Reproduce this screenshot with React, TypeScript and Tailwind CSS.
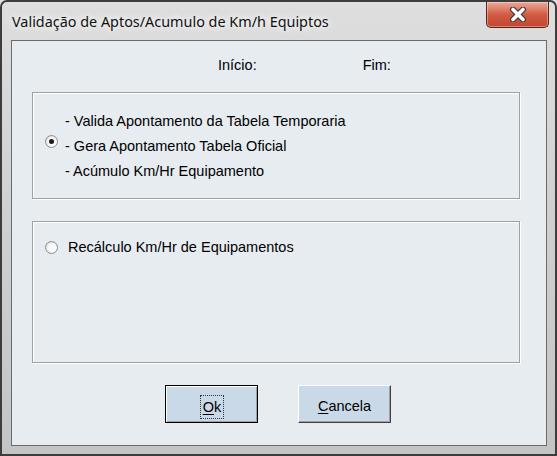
import { useState } from "react";

const Radio = ({ checked }: { checked: boolean }) => (
  <span className="relative flex h-[13px] w-[13px] shrink-0 items-center justify-center rounded-full border border-[#8e8f8f] bg-gradient-to-br from-[#d4d5d6] to-[#ffffff]">
    <span className="h-[9px] w-[9px] rounded-full bg-gradient-to-br from-[#f2f2f2] to-[#ffffff]" />
    {checked && (
      <span className="absolute h-[5px] w-[5px] rounded-full bg-[#1b1b1b]" />
    )}
  </span>
);

export default function App() {
  const [option, setOption] = useState<number>(1);

  return (
    <div className="h-[456px] w-[557px] overflow-hidden bg-[#e0e0e0] font-['Liberation_Sans',Arial,sans-serif] text-[14.5px] text-black">
      <div className="flex h-full w-full flex-col rounded-t-[7px] border-2 border-[#3d3d3d] bg-gradient-to-b from-[#dedede] via-[#cfcfcf] to-[#c4c4c4]">
        {/* barra de titulo */}
        <div className="flex h-[38px] items-start justify-between">
          <span className="mt-[10px] ml-[10px] font-['Noto_Sans',sans-serif] text-[14.4px] leading-[20px] text-[#111] [text-shadow:0_0_10px_#ffffff,0_0_6px_#ffffff]">
            Validação de Aptos/Acumulo de Km/h Equiptos
          </span>
          <button className="mr-[6px] flex h-[26px] w-[63px] items-center justify-center rounded-b-[5px] border border-t-0 border-[#5a2519] bg-gradient-to-b from-[#e9a99b] via-[#d25b43] to-[#c2452f] shadow-[inset_0_0_0_1px_rgba(255,255,255,0.35)]">
            <svg width="18" height="15" viewBox="0 0 18 15">
              <path
                d="M4 2.5 L14 12.5 M14 2.5 L4 12.5"
                stroke="#3a3a3a"
                strokeWidth="6"
                strokeLinecap="round"
              />
              <path
                d="M4 2.5 L14 12.5 M14 2.5 L4 12.5"
                stroke="#ffffff"
                strokeWidth="3.6"
                strokeLinecap="round"
              />
            </svg>
          </button>
        </div>

        {/* area cliente */}
        <div className="mx-[9px] mr-[8px] flex h-[406px] flex-col border border-[#6b6b6b] bg-[#e7ecf0]">
          <div className="flex pt-[16px] leading-[16px]">
            <span className="ml-[206px]">Início:</span>
            <span className="ml-[106px]">Fim:</span>
          </div>

          <div
            className="mt-[19px] ml-[20px] flex h-[107px] w-[488px] items-center border border-[#a0a0a0] pb-[8px] pl-[12px] shadow-[1px_1px_0_#ffffff,inset_1px_1px_0_#ffffff]"
            onClick={() => setOption(1)}
          >
            <Radio checked={option === 1} />
            <div className="ml-[7px] flex flex-col pt-[10px] leading-[25px]">
              <span>- Valida Apontamento da Tabela Temporaria</span>
              <span>- Gera Apontamento Tabela Oficial</span>
              <span>- Acúmulo Km/Hr Equipamento</span>
            </div>
          </div>

          <div
            className="mt-[22px] ml-[20px] h-[142px] w-[488px] border border-[#a0a0a0] pt-[13px] pl-[12px] shadow-[1px_1px_0_#ffffff,inset_1px_1px_0_#ffffff]"
            onClick={() => setOption(2)}
          >
            <div className="flex items-center leading-[25px]">
              <Radio checked={option === 2} />
              <span className="ml-[10px]">Recálculo Km/Hr de Equipamentos</span>
            </div>
          </div>

          <div className="mt-[22px] ml-[153px] flex gap-[40px]">
            <button className="h-[38px] w-[93px] border border-black">
              <span className="flex h-full w-full items-center justify-center border-t border-l border-white border-r-[#404040] border-b-[#404040] bg-[#cad9e7] pt-[5px] shadow-[inset_-1px_-1px_0_#a0a0a0]">
                <span className="border border-dotted border-[#333] px-[2px] leading-[22px]">
                  <span className="underline underline-offset-2">O</span>k
                </span>
              </span>
            </button>
            <button className="flex h-[38px] w-[93px] items-center justify-center border border-t-white border-l-white border-r-[#404040] border-b-[#404040] bg-[#cad9e7] pt-[5px] shadow-[inset_-1px_-1px_0_#a0a0a0]">
              <span>
                <span className="underline underline-offset-2">C</span>ancela
              </span>
            </button>
          </div>
        </div>
      </div>
    </div>
  );
}
